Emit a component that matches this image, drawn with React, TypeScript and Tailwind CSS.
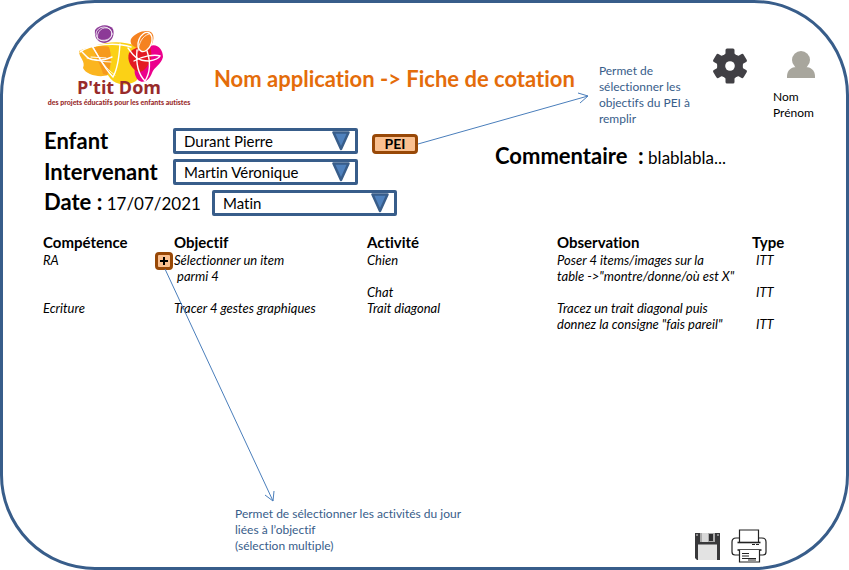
import React from "react";

function LogoMark() {
  return (
    <svg viewBox="76 22 90 62" className="ml-1 h-[62px] w-[90px]" aria-hidden="true">
      <path d="M96 45C108 40 124 40 136 45C142 54 143 72 136 80C128 85 119 84 113 80C106 74 99 60 96 45Z" fill="#fbd116" />
      <path d="M79 50C85 47 100 44 108 45C112 52 112 66 108 74C100 77 86 74 83 67C86 60 79 57 79 50Z" fill="#fbb520" />
      <path d="M93 47C99 45 105 45 109 46C112 54 111 67 107 74L103 73C101 64 95 56 93 47Z" fill="#f6991c" />
      <path d="M95 29C100 23 109 23 113 28C115 34 112 41 105 42C98 42 94 37 95 29Z" fill="#8c3a97" />
      <path d="M150 45C157 42 163 48 163 56C161 64 154 66 152 72C149 80 143 83 138 79C133 73 134 66 138 60Z" fill="#ec008c" />
      <path d="M129 52C134 46 144 44 150 46C153 53 151 63 144 69C139 73 134 70 130 63C128 59 128 55 129 52Z" fill="#e31b23" />
      <path d="M131 38C135 32 145 28 151 31C156 35 153 44 147 50C143 52 139 48 135 46C131 44 130 41 131 38Z" fill="#f58220" />
      <g fill="none" stroke="#fff" strokeWidth="1.4" strokeLinecap="round">
        <ellipse cx="104" cy="33" rx="8" ry="7" strokeWidth="0.8" />
        <path d="M98 39C95 31 103 24 110 28C115 34 109 41 100 39" strokeWidth="0.7" />
        <path d="M80 51C91 43 116 41 131 46" />
        <path d="M81 50C86 54 87 59 96 59C101 60 107 58 112 56" />
        <path d="M87 57C96 59 102 61 111 61M91 56L106 57" strokeWidth="1" />
        <path d="M92 45C99 56 104 67 113 76C117 69 119 58 120 43" />
        <path d="M93 46C101 60 106 68 115 74" strokeWidth="0.8" />
        <ellipse cx="145" cy="41" rx="6.5" ry="10" transform="rotate(22 145 41)" />
        <path d="M138 50C139 42 142 35 149 33" strokeWidth="0.8" />
        <path d="M128 47C132 52 135 60 149 60C155 59 159 57 160 55C155 53 142 55 134 60" />
        <path d="M137 49C136 60 137 72 145 80C150 72 151 62 147 50" />
      </g>
    </svg>
  );
}

function Gear() {
  return (
    <svg viewBox="-17 -18 34 36" className="h-9 w-[34px]" aria-hidden="true">
      <g fill="#414045">
        <circle r="12.5" />
        {[0, 60, 120, 180, 240, 300].map((a) => (
          <path key={a} transform={`rotate(${a})`} d="M-7 -10L-4.5 -12.5V-16Q-4.5 -17.5 -3 -17.5H3Q4.5 -17.5 4.5 -16V-12.5L7 -10Z" />
        ))}
      </g>
      <circle r="4.8" fill="#fff" />
    </svg>
  );
}

function Person() {
  return (
    <svg viewBox="0 0 28 27" className="h-[27px] w-7" aria-hidden="true">
      <g fill="#a8a69d">
        <circle cx="14" cy="9" r="9" />
        <path d="M0 27V25C0 19 5 16 9 16H19C23 16 28 19 28 25V27Z" />
      </g>
    </svg>
  );
}

function Floppy() {
  return (
    <svg viewBox="0 0 25 27" className="h-[27px] w-[25px]" aria-hidden="true">
      <path d="M0 0H25V27H2L0 25Z" fill="#38383a" />
      <rect x="5" y="0" width="15" height="9" fill="#aaa" />
      <rect x="7" y="0" width="6" height="9" fill="#d8d8d8" />
      <rect x="14" y="1" width="4" height="7" fill="#303032" />
      <rect x="3" y="11.5" width="19" height="15.5" fill="#e3e3e3" />
      <path d="M1 2H3M22 2H24" stroke="#ddd" strokeWidth="1" />
    </svg>
  );
}

function Printer() {
  return (
    <svg viewBox="0 0 36 34" className="h-[34px] w-9" fill="none" stroke="#222" strokeWidth="1.2" aria-hidden="true">
      <path d="M8 9H5Q1 9 1 13V23Q1 26 4 26H8M28 9H31Q35 9 35 13V23Q35 26 32 26H29" />
      <path d="M8.5 13V1H27.5V13" fill="#fff" />
      <path d="M6.5 13.5H29.5" strokeWidth="1.6" />
      <path d="M21 15.5H24M25 15.5H28" />
      <path d="M6.5 21H30.5" strokeWidth="1.6" />
      <path d="M8.5 21V33H28.5V21" fill="#fff" />
      <path d="M11 24.5H18M11 27H18M11 29.5H25M17 31H25" strokeWidth="1" />
    </svg>
  );
}

function Picker({ id, value }: { id: string; value: string }) {
  return (
    <div className="relative h-[26px] w-[185px] shrink-0">
      <select
        id={id}
        defaultValue={value}
        className="h-full w-full appearance-none rounded-xs border-3 border-[#385d8a] bg-white pl-2 text-[15px] leading-5 text-black"
      >
        <option>{value}</option>
      </select>
      <svg viewBox="0 0 18 20" className="pointer-events-none absolute top-[3px] right-2 h-5 w-[18px]" aria-hidden="true">
        <path d="M1.5 1.5H16.5L9 18Z" fill="#4f81bd" stroke="#385d8a" strokeWidth="2.5" strokeLinejoin="round" />
      </svg>
    </div>
  );
}

function Arrows() {
  return (
    <svg className="pointer-events-none absolute top-0 left-0 h-[510px] w-[600px]" fill="none" stroke="#4a7ebb" strokeWidth="1" aria-hidden="true">
      <path d="M415 141L585 93M575 90L585 93L577 100" />
      <path d="M162 266L270 498M262 492L270 498L271 488" />
    </svg>
  );
}

export default function App() {
  const cell = "p-0 align-top";
  return (
    <main className="relative flex min-h-screen flex-col rounded-[95px] border-3 border-[#385d8a] bg-white font-['Lato','Liberation_Sans',sans-serif] text-black [font-variant-ligatures:none]">
      <header className="flex items-start pt-5 pr-[31px] pl-10">
        <div className="flex w-[152px] shrink-0 flex-col items-center whitespace-nowrap text-[#982b2b]">
          <LogoMark />
          <span className="-mt-2 font-['Open_Sans',sans-serif] text-lg leading-5 font-bold">P'tit Dom</span>
          <span className="text-[7px] leading-[10px] font-black">des projets éducatifs pour les enfants autistes</span>
        </div>
        <h1 className="mt-10 ml-[19px] text-[22px] leading-8 font-bold whitespace-nowrap text-[#e46c0a]">
          Nom application -&gt; Fiche de cotation
        </h1>
        <p className="mt-10 ml-6 w-[100px] text-xs leading-4 text-[#385d8a]">Permet de sélectionner les objectifs du PEI à remplir</p>
        <div className="ml-auto flex gap-[26px]">
          <button type="button" aria-label="Paramètres" className="mt-[25px] h-9">
            <Gear />
          </button>
          <div className="flex w-[42px] flex-col">
            <div className="mt-7 flex justify-end">
              <Person />
            </div>
            <p className="mt-[11px] text-xs leading-4">
              Nom
              <br />
              Prénom
            </p>
          </div>
        </div>
      </header>

      <section className="-mt-0.5 flex pr-7 pl-[41px]">
        <div className="w-[451px] shrink-0">
          <div className="flex h-[31px] items-center">
            <label htmlFor="enfant" className="w-[129px] text-[22px] leading-7 font-bold">Enfant</label>
            <Picker id="enfant" value="Durant Pierre" />
            <button type="button" className="mt-1.5 ml-[14px] h-5 w-[46px] rounded-sm border-3 border-[#984807] bg-[#fac090] text-sm leading-3 font-bold">
              PEI
            </button>
          </div>
          <div className="flex h-[31px] items-center">
            <label htmlFor="intervenant" className="w-[129px] text-[22px] leading-7 font-bold">Intervenant</label>
            <Picker id="intervenant" value="Martin Véronique" />
          </div>
          <div className="flex h-[31px] items-center">
            <label htmlFor="moment" className="w-[168px] text-[17px] leading-7 whitespace-nowrap">
              <b className="text-[22px]">Date :</b> 17/07/2021
            </label>
            <Picker id="moment" value="Matin" />
          </div>
        </div>
        <p className="mt-[17px] text-[17px] leading-7 whitespace-nowrap">
          <b className="text-[22px]">Commentaire&nbsp; :</b> blablabla...
        </p>
      </section>

      <section className="mt-[14px] pl-10">
        <table className="w-full table-fixed border-collapse text-left text-[13px] leading-4">
          <thead>
            <tr className="h-5 text-[15px] leading-5">
              <th className="w-[131px] p-0">Compétence</th>
              <th className="w-[193px] p-0">Objectif</th>
              <th className="w-[190px] p-0">Activité</th>
              <th className="w-[195px] p-0">Observation</th>
              <th className="p-0">Type</th>
            </tr>
          </thead>
          <tbody className="italic">
            <tr>
              <td className={cell}>
                <div className="flex justify-between pr-px">
                  <span>RA</span>
                  <button type="button" aria-label="Ajouter" className="-mb-1 flex h-[18px] w-[18px] items-center justify-center rounded-sm border-3 border-[#984807] bg-[#fac090]">
                    <svg viewBox="0 0 8 8" className="h-2 w-2" aria-hidden="true">
                      <path d="M4 0V8M0 4H8" stroke="#000" strokeWidth="2" />
                    </svg>
                  </button>
                </div>
              </td>
              <td className={cell}>
                Sélectionner un item
                <br />
                &nbsp;parmi 4
              </td>
              <td className={cell}>Chien</td>
              <td className={cell}>
                Poser 4 items/images sur la
                <br />
                table -&gt;"montre/donne/où est X"
              </td>
              <td className="p-0 pl-1 align-top">ITT</td>
            </tr>
            <tr>
              <td className={cell} />
              <td className={cell} />
              <td className={cell}>Chat</td>
              <td className={cell} />
              <td className="p-0 pl-1 align-top">ITT</td>
            </tr>
            <tr>
              <td className={cell}>Ecriture</td>
              <td className={cell}>Tracer 4 gestes graphiques</td>
              <td className={cell}>Trait diagonal</td>
              <td className={cell}>
                Tracez un trait diagonal puis
                <br />
                donnez la consigne "fais pareil"
              </td>
              <td className="p-0 pl-1 align-bottom">ITT</td>
            </tr>
          </tbody>
        </table>
      </section>

      <footer className="mt-auto flex items-end justify-between pr-[79px] pb-1 pl-[232px]">
        <p className="pb-[9px] text-xs leading-4 text-[#385d8a]">
          Permet de sélectionner les activités du jour
          <br />
          liées à l’objectif
          <br />
          (sélection multiple)
        </p>
        <div className="flex items-center gap-[11px]">
          <button type="button" aria-label="Enregistrer">
            <Floppy />
          </button>
          <button type="button" aria-label="Imprimer">
            <Printer />
          </button>
        </div>
      </footer>
      <Arrows />
    </main>
  );
}
